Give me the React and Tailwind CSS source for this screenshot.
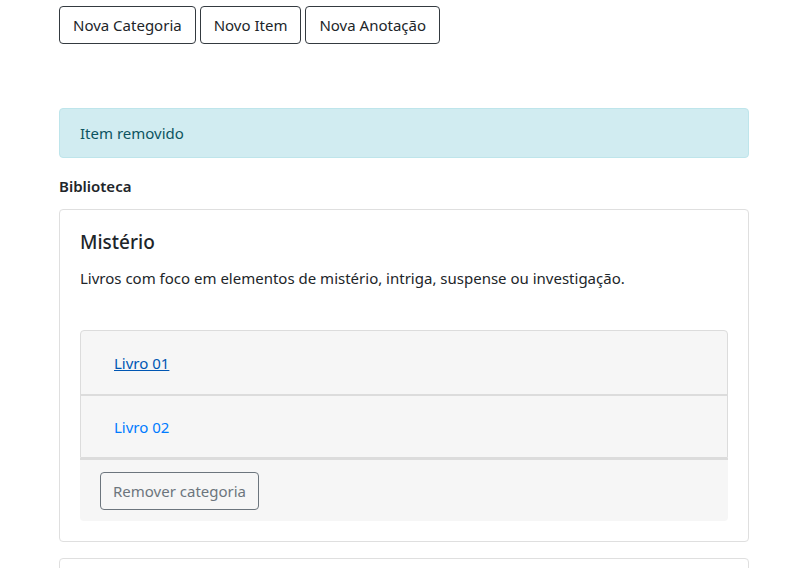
import React from 'react';

const font = { fontFamily: '"Noto Sans", "Open Sans", sans-serif' };

const TopButton = ({ children }) => (
  <button className="h-[38px] px-[13px] border border-[#343a40] rounded text-[#212529] text-[15px] bg-white">
    {children}
  </button>
);

const CategoryCard = ({ title, description, items }) => (
  <div className="border border-[#dfdfdf] rounded p-5 pb-5">
    <h5 className="text-[19px] leading-6 font-medium text-[#212529] mb-3">{title}</h5>
    <p className="text-[15px] leading-6 text-[#212529]">{description}</p>
    <div className="mt-10">
      <div className="border border-[#dcdcdc] rounded-t bg-[#f6f6f6]">
        {items.map((item, i) => (
          <div
            key={i}
            className={`h-[63px] flex items-center pl-[33px] ${i > 0 ? 'border-t-2 border-[#dcdcdc]' : ''}`}
          >
            <a
              href="#"
              className={i === 0 ? 'text-[#0056b3] underline' : 'text-[#007bff]'}
            >
              {item}
            </a>
          </div>
        ))}
      </div>
      <div className="border-t-2 border-[#dcdcdc] bg-[#f6f6f6] rounded-b px-5 pt-[12px] pb-[11px]">
        <button className="h-[38px] px-3 border border-[#6c757d] rounded text-[#6c757d] text-[15px]">
          Remover categoria
        </button>
      </div>
    </div>
  </div>
);

export default function App() {
  return (
    <div className="bg-white h-screen overflow-hidden text-[#212529] text-[15px] leading-6" style={font}>
      <div className="w-[690px] ml-[59px] pt-[6px]">
        <div className="flex gap-1">
          <TopButton>Nova Categoria</TopButton>
          <TopButton>Novo Item</TopButton>
          <TopButton>Nova Anotação</TopButton>
        </div>
        <div className="mt-16 h-[50px] flex items-center px-5 bg-[#d1ecf1] border border-[#bee5eb] rounded text-[#0c5460]">
          Item removido
        </div>
        <h6 className="mt-4 mb-[11px] text-[15px] font-semibold text-[#212529]">Biblioteca</h6>
        <CategoryCard
          title="Mistério"
          description="Livros com foco em elementos de mistério, intriga, suspense ou investigação."
          items={['Livro 01', 'Livro 02']}
        />
        <div className="mt-4 h-24 border border-[#dfdfdf] rounded" />
      </div>
    </div>
  );
}
